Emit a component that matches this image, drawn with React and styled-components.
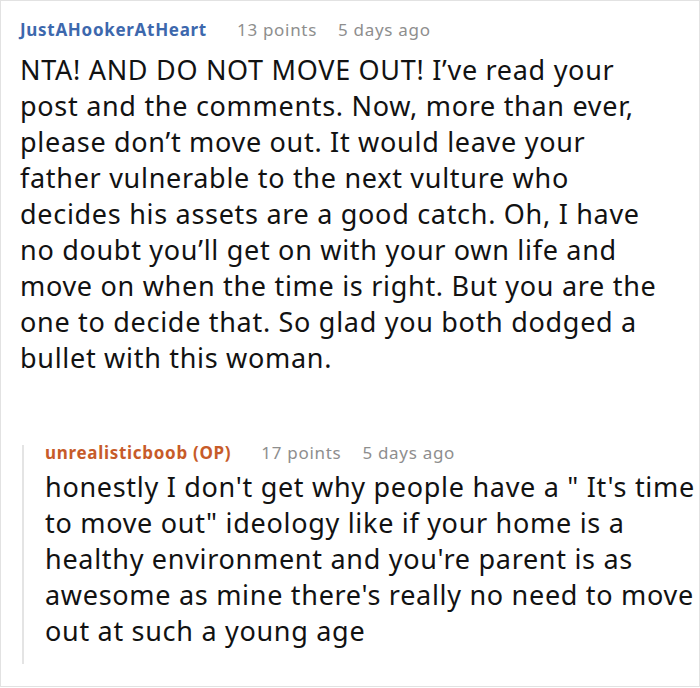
import React from "react";
import styled, { createGlobalStyle } from "styled-components";

const Global = createGlobalStyle`
  html, body { margin: 0; padding: 0; background: #fff; }
  body { font-family: "Noto Sans", "Open Sans", sans-serif; }
`;

const Frame = styled.div`
  box-sizing: border-box;
  width: 700px;
  height: 687px;
  border: 1px solid #e2e2e2;
  padding: 17px 0 0 19px;
  overflow: hidden;
`;

const Header = styled.div`
  display: flex;
  align-items: center;
  height: 24px;
  font-size: 17px;
  letter-spacing: 0.7px;
  line-height: 24px;
  white-space: nowrap;
`;

const User = styled.span`
  font-weight: 700;
  color: ${(p) => (p.$op ? "#c75b29" : "#3d68ad")};
  margin-right: 30px;
`;

const Meta = styled.span`
  color: #8e8e8e;
  margin-right: 21px;
`;

const Body = styled.p`
  margin: ${(p) => p.$mt}px 0 0 0;
  width: ${(p) => p.$w}px;
  font-size: 27px;
  letter-spacing: 0.7px;
  line-height: 36px;
  color: #121212;
`;

const Reply = styled.div`
  margin: 75px 0 0 2px;
  border-left: 2px solid #e4e4e4;
  padding: 0 0 20px 21px;
  height: 219px;
  box-sizing: border-box;
`;

const ReplyHeader = styled(Header)`
  height: 16px;
  line-height: 16px;
  margin-top: -6px;
`;

export default function App() {
  return (
    <>
      <Global />
      <Frame>
        <Header>
          <User>JustAHookerAtHeart</User>
          <Meta>13 points</Meta>
          <Meta>5 days ago</Meta>
        </Header>
        <Body $mt={10} $w={638}>
          NTA! AND DO NOT MOVE OUT! I’ve read your post and the comments. Now,
          more than ever, please don’t move out. It would leave your father
          vulnerable to the next vulture who decides his assets are a good
          catch. Oh, I have no doubt you’ll get on with your own life and move
          on when the time is right. But you are the one to decide that. So glad
          you both dodged a bullet with this woman.
        </Body>
        <Reply>
          <ReplyHeader>
            <User $op>unrealisticboob (OP)</User>
            <Meta>17 points</Meta>
            <Meta>5 days ago</Meta>
          </ReplyHeader>
          <Body $mt={8} $w={652}>
            honestly I don't get why people have a " It's time to move out"
            ideology like if your home is a healthy environment and you're
            parent is as awesome as mine there's really no need to move out at
            such a young age
          </Body>
        </Reply>
      </Frame>
    </>
  );
}
